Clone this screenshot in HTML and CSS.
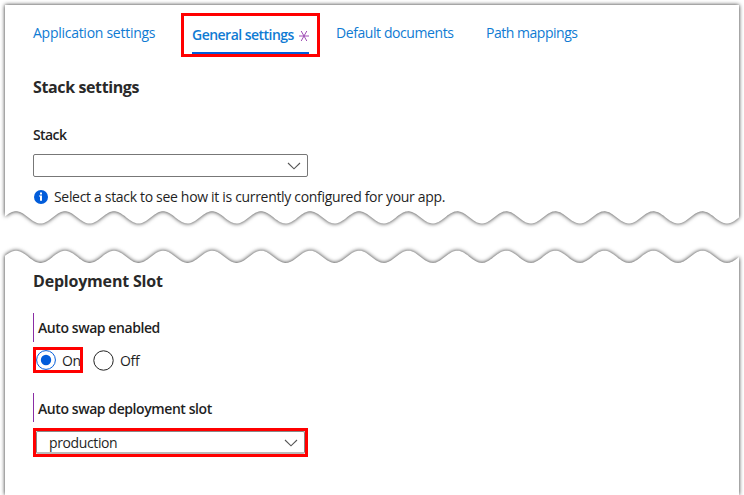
FILE: index.html
```html
<!DOCTYPE html>
<html lang="en">
<head>
<meta charset="utf-8">
<title>General settings</title>
<link rel="stylesheet" href="styles.css">
</head>
<body>
<section class="panel panel-top">
  <svg class="sheet" width="744" height="235" viewBox="0 0 744 235" aria-hidden="true"><path id="top-sheet"/></svg>
  <nav class="tabs">
    <a class="tab t-app">Application settings</a>
    <a class="tab active callout"><span class="active-label"><span class="t-gen">General settings</span><svg width="10" height="12" viewBox="0 0 10 12"><path d="M0 6H10M2.2 1L7.8 11M7.8 1L2.2 11" fill="none" stroke="#a04fb5" stroke-width="1"/></svg></span></a>
    <a class="tab t-doc">Default documents</a>
    <a class="tab t-path">Path mappings</a>
  </nav>
  <h2><span class="t-h1">Stack settings</span></h2>
  <div class="label stack-label"><span class="t-stack">Stack</span></div>
  <div class="select"><svg class="chevron" width="14" height="8" viewBox="0 0 14 8"><path d="M1 1L7 6.8L13 1"/></svg></div>
  <div class="info">
    <svg width="14" height="14" viewBox="0 0 14 14"><circle cx="7" cy="7" r="7" fill="#015cda"/><path d="M6 2.5h2v2H6zM5 5.5h3v5.3H6V6.6H5z" fill="#fff"/></svg>
    <span class="t-info">Select a stack to see how it is currently configured for your app.</span>
  </div>
</section>
<section class="panel panel-bottom">
  <svg class="sheet" width="744" height="260" viewBox="0 235 744 260" aria-hidden="true"><path id="bottom-sheet"/></svg>
  <h2><span class="t-h2">Deployment Slot</span></h2>
  <div class="label changed"><span class="t-enabled">Auto swap enabled</span></div>
  <div class="radios">
    <div class="radio callout on"><svg width="20" height="20" viewBox="0 0 20 20"><circle cx="10" cy="10" r="9.4" fill="none" stroke="#015cda"/><circle cx="10" cy="10" r="5.2" fill="#015cda"/></svg><span class="t-on">On</span></div>
    <div class="radio"><svg width="21" height="21" viewBox="0 0 21 21"><circle cx="10.5" cy="10.5" r="9.7" fill="none" stroke="#222"/></svg><span class="t-off">Off</span></div>
  </div>
  <div class="label changed second"><span class="t-slot">Auto swap deployment slot</span></div>
  <div class="callout select-callout"><div class="select inner"><span class="t-prod">production</span><svg class="chevron" width="14" height="8" viewBox="0 0 14 8"><path d="M1 1L7 6.8L13 1"/></svg></div></div>
</section>
<script src="sheets.js"></script>
</body>
</html>
```
FILE: sheets.js
```js
// Torn edge: a 49px sine wave between the left and right sides of the sheet.
function wave(mid) {
  const pts = [];
  for (let x = 5; x <= 739; x += 1) {
    const y = mid - 6.1 * Math.cos((x - 16) * 2 * Math.PI / 49.03);
    pts.push(x + ' ' + y.toFixed(2));
  }
  return pts;
}
document.getElementById('top-sheet').setAttribute('d',
  'M739 5L5 5L' + wave(217.4).join('L') + 'Z');
document.getElementById('bottom-sheet').setAttribute('d',
  'M5 495L' + wave(256.8).join('L') + 'L739 495Z');
```
FILE: styles.css
```css
* { box-sizing: border-box; }
body {
  margin: 0;
  width: 744px;
  height: 495px;
  overflow: hidden;
  background: #fff;
  color: #1f1f1f;
  font: 14px/20px "Open Sans", "Noto Sans", sans-serif;
  letter-spacing: -.27px;
}
.panel { position: relative; padding-left: 33px; }
.panel-top { height: 235px; padding-top: 13px; }
.panel-bottom { height: 260px; padding-top: 35px; }
.sheet {
  position: absolute;
  left: 0;
  top: 0;
  z-index: -1;
  fill: #fff;
}
.sheet path { filter: drop-shadow(0 0 2px rgba(0, 0, 0, .85)); }
.tabs { display: flex; height: 44px; color: #0f7bd3; }
.tab { padding-top: 10px; white-space: nowrap; }
.callout { border: 3px solid #f00; }
.t-app { width: 148px; }
.active {
  width: 139px;
  margin-right: 16px;
  padding: 9px 8px 0;
  font-weight: 600;
}
.active-label {
  display: flex;
  align-items: center;
  justify-content: space-between;
  width: 117px;
  height: 29px;
  padding-bottom: 7px;
  border-bottom: 2px solid #015cda;
}
.active-label svg { margin-top: 1px; }
.t-gen { letter-spacing: -.52px; }
.t-doc { width: 150px; letter-spacing: -.42px; }
.t-path { letter-spacing: -.47px; }
h2 { margin: 0; font-size: 16px; line-height: 22px; font-weight: 700; color: #292929; }
.t-h1 { letter-spacing: -.38px; }
.t-h2 { letter-spacing: -.2px; }
.panel-top h2 { margin-top: 19px; }
.label { font-weight: 600; letter-spacing: -.42px; }
.stack-label { margin-top: 27px; }
.t-stack { letter-spacing: -.6px; }
.select {
  display: flex;
  align-items: center;
  justify-content: flex-end;
  width: 275px;
  height: 23px;
  padding-right: 6px;
  border: 1px solid #777;
  border-radius: 2px;
  margin-top: 9px;
}
.chevron { fill: none; stroke: #555; stroke-width: 1.1; }
.info { display: flex; align-items: center; gap: 6px; margin: 10px 0 0 1px; white-space: nowrap; letter-spacing: -.32px; }
.changed {
  height: 29px;
  margin-top: 21px;
  padding: 5px 0 0 4px;
  border-left: 1px solid #8a2da5;
}
.radios { display: flex; align-items: center; margin-top: 5px; height: 26px; }
.radio { display: flex; align-items: center; gap: 6px; }
.radio span { position: relative; top: 1px; }
.on { width: 50px; height: 26px; margin-right: 10px; overflow: hidden; }
.on svg { flex: none; }
.second { margin-top: 20px; padding-top: 6px; }
.select-callout { width: 275px; height: 29px; margin-top: 6px; }
.inner {
  width: 269px;
  height: 23px;
  margin: 0;
  padding: 1px 6px 0 12px;
  border-color: #888;
  border-bottom: 2px solid #bbb;
  justify-content: space-between;
}
.t-prod { letter-spacing: -.38px; }
```
